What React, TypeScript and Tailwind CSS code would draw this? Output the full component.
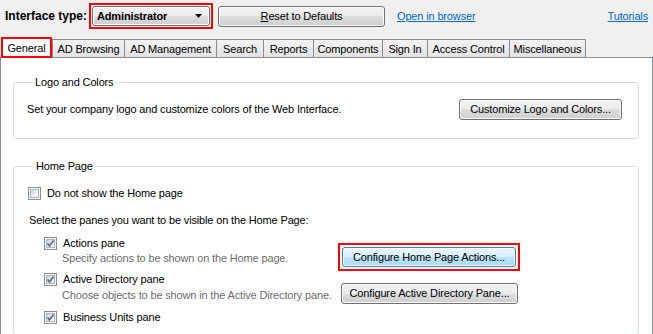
import React from "react";

const btnGray =
  "border border-[#707070] rounded-[3px] bg-[linear-gradient(#f2f2f2_0%,#ebebeb_50%,#dddddd_50%,#cfcfcf_100%)] shadow-[inset_0_0_0_1px_#fcfcfc]";
const btnBlue =
  "border border-[#3c7fb1] rounded-[3px] bg-[linear-gradient(#eaf6fd_0%,#d9f0fc_50%,#bee6fd_50%,#a7d9f5_100%)] shadow-[inset_0_0_0_1px_#fcfcfc]";

function Checkbox({ checked }: { checked?: boolean }) {
  return (
    <div className="w-[13px] h-[13px] shrink-0 border border-[#8e8f8f] bg-[#f4f4f4] p-[1px]">
      <div className="relative w-full h-full border border-[#b0b5bb] bg-[linear-gradient(135deg,#cdd1d7_0%,#eef0f2_60%,#f8f8f8_100%)]">
        {checked && (
          <svg
            className="absolute -left-[1px] -top-[1px]"
            width="9"
            height="9"
            viewBox="0 0 9 9"
          >
            <path
              d="M1.5 4.5 L3.5 6.8 L7.6 1.5"
              fill="none"
              stroke="#5a6d8c"
              strokeWidth="1.7"
            />
          </svg>
        )}
      </div>
    </div>
  );
}

const tabs: { label: string; w: number }[] = [
  { label: "AD Browsing", w: 72 },
  { label: "AD Management", w: 92 },
  { label: "Search", w: 47 },
  { label: "Reports", w: 50 },
  { label: "Components", w: 69 },
  { label: "Sign In", w: 45 },
  { label: "Access Control", w: 82 },
  { label: "Miscellaneous", w: 77 },
];

export default function App() {
  return (
    <div className="w-[653px] h-[334px] overflow-hidden bg-[#f0f0f0] text-[11px] leading-[14px] tracking-[-0.15px] text-black font-['Liberation_Sans',Arial,sans-serif]">
      {/* Top bar */}
      <div className="flex items-center h-[32px] pl-[5px] pr-[5px]">
        <div className="w-[84px] text-[12px] font-bold tracking-normal">Interface type:</div>
        <div className="border-2 border-[#ff0000] p-[1px]">
          <div
            className={`${btnGray} flex items-center w-[118px] h-[20px] pl-[4px] pr-[7px]`}
          >
            <span className="font-bold flex-1">Administrator</span>
            <svg width="7" height="4" viewBox="0 0 7 4">
              <path d="M0 0 H7 L3.5 4 Z" fill="#000" />
            </svg>
          </div>
        </div>
        <div
          className={`${btnGray} ml-[5px] w-[167px] h-[21px] flex items-center justify-center`}
        >
          <span>
            <span className="underline">R</span>eset to Defaults
          </span>
        </div>
        <span className="ml-[12px] text-[#0066cc] underline">Open in browser</span>
        <span className="ml-auto text-[#0066cc] underline">Tutorials</span>
      </div>

      {/* Tabs */}
      <div className="flex items-end h-[25px] pl-[1px]">
        <div className="relative z-10 -mb-[1px] w-[51px] h-[21px] bg-white border-2 border-[#ff0000] flex items-center justify-center">
          General
        </div>
        {tabs.map((t, i) => (
          <div
            key={t.label}
            style={{ width: t.w }}
            className={`h-[18px] flex items-center justify-center border-t border-l border-[#898c95] bg-[linear-gradient(#f2f2f2,#e3e3e3)] ${
              i === tabs.length - 1 ? "border-r" : ""
            }`}
          >
            {t.label}
          </div>
        ))}
      </div>

      {/* Panel */}
      <div className="bg-white border border-[#898c95] h-[300px] pl-[12px] pr-[13px] pt-[17px]">
        <fieldset className="border border-[#d5dfe5] rounded-[3px] pl-[13px] pr-[16px] pt-[10px] pb-[19px]">
          <legend className="ml-[6px] px-[2px]">Logo and Colors</legend>
          <div className="flex items-center justify-between h-[20px]">
            <span>Set your company logo and customize colors of the Web Interface.</span>
            <div
              className={`${btnGray} w-[163px] h-[21px] flex items-center justify-center`}
            >
              Customize Logo and Colors...
            </div>
          </div>
        </fieldset>

        <fieldset className="mt-[20px] border border-[#d5dfe5] rounded-[3px] pl-[14px] pt-[13px] pb-[9px] h-[176px]">
          <legend className="ml-[6px] px-[2px]">Home Page</legend>
          <div className="flex items-center gap-[6px] h-[14px]">
            <Checkbox />
            <span>Do not show the Home page</span>
          </div>
          <div className="mt-[13px] ml-[1px] h-[14px] flex items-center">
            Select the panes you want to be visible on the Home Page:
          </div>
          <div className="pl-[16px]">
            <div className="mt-[9px] flex items-center gap-[6px] h-[14px]">
              <Checkbox checked />
              <span>Actions pane</span>
            </div>
            <div className="flex items-center h-[14px] mt-[1px]">
              <span className="w-[294px] shrink-0 pl-[18px] text-[#6d6d6d] whitespace-nowrap">
                Specify actions to be shown on the Home page.
              </span>
              <div className="mb-[2px] border-2 border-[#ff0000] p-[2px] bg-white">
                <div
                  className={`${btnBlue} w-[174px] h-[20px] flex items-center justify-center`}
                >
                  Configure Home Page Actions...
                </div>
              </div>
            </div>
            <div className="mt-[7px] flex items-center gap-[6px] h-[14px]">
              <Checkbox checked />
              <span>Active Directory pane</span>
            </div>
            <div className="flex items-center h-[14px] mt-[2px]">
              <span className="w-[297px] shrink-0 pl-[18px] text-[#6d6d6d] whitespace-nowrap">
                Choose objects to be shown in the Active Directory pane.
              </span>
              <div
                className={`${btnGray} mb-[4px] w-[177px] h-[21px] flex items-center justify-center`}
              >
                Configure Active Directory Pane...
              </div>
            </div>
            <div className="mt-[8px] flex items-center gap-[6px] h-[14px]">
              <Checkbox checked />
              <span>Business Units pane</span>
            </div>
          </div>
        </fieldset>
      </div>
    </div>
  );
}
